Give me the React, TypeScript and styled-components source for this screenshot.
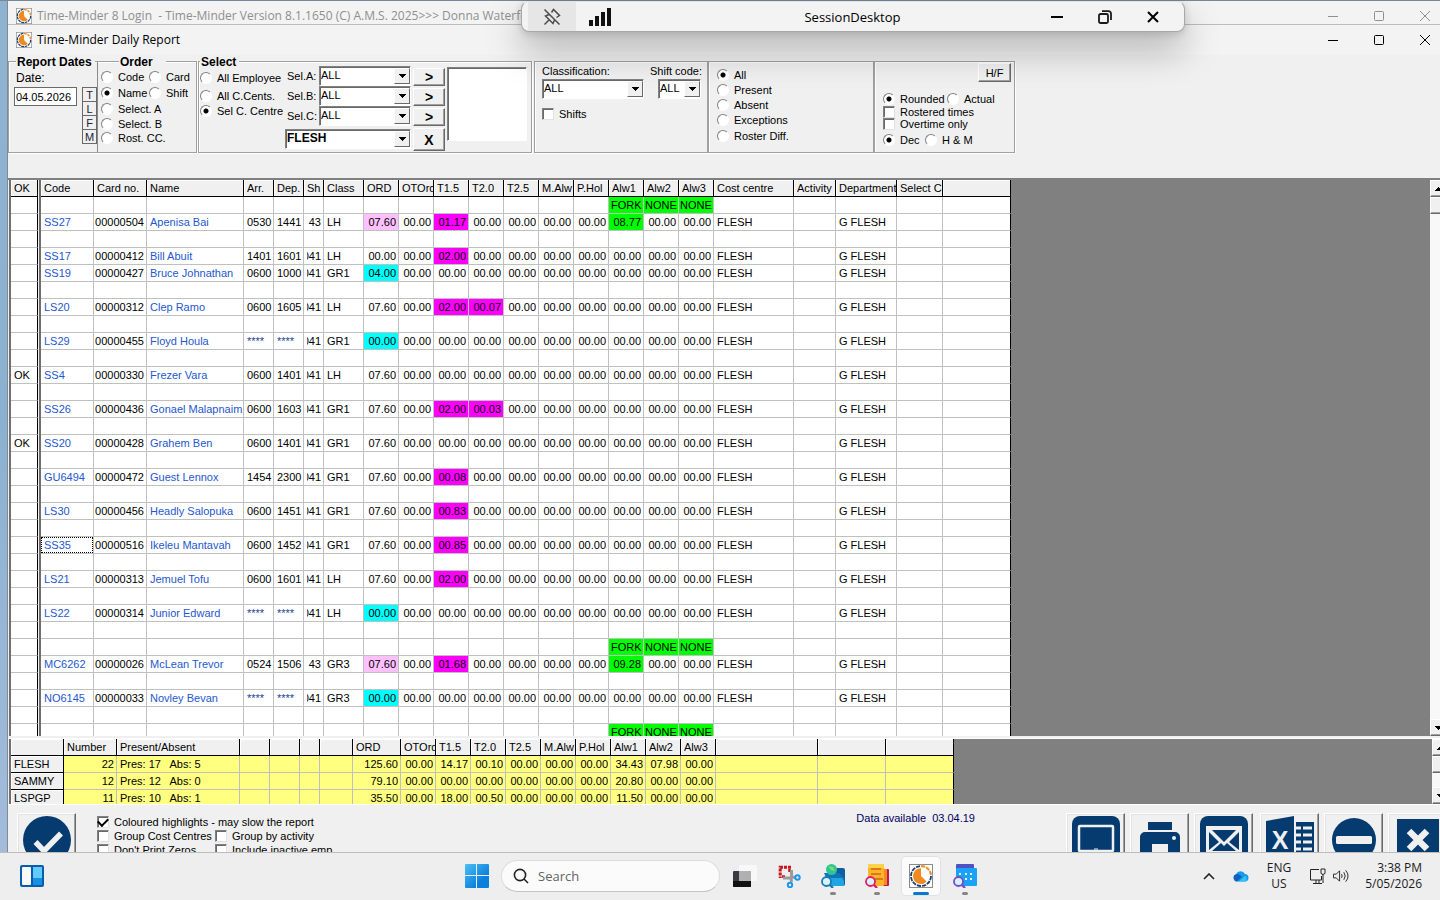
import React from "react";
import styled, { createGlobalStyle, css } from "styled-components";

const FACE = "#f0f0f0";
const NAVY = "#063b70";
const UI = '"Open Sans", "Noto Sans", sans-serif';
const CLASSIC = '"Liberation Sans", Arial, sans-serif';

const Global = createGlobalStyle`
  * { box-sizing: border-box; }
  html, body { margin: 0; padding: 0; height: 100%; overflow: hidden; }
  body { font: 11px/14px ${CLASSIC}; color: #000; }
  button, input, select { font: inherit; color: inherit; margin: 0; padding: 0; }
  button { cursor: pointer; }
`;

/* ---------- shell ---------- */

const Screen = styled.div`
  position: relative;
  display: flex;
  flex-direction: column;
  height: 100vh;
  overflow: hidden;
  background: ${FACE};
`;

const Desktop = styled.div`
  flex: 1;
  min-height: 0;
  display: flex;
  padding-left: 7px;
  border-top: 1px solid #76899a;
  background: linear-gradient(#8fb3cf, #8cb1d0 50%, #a4bbda);
`;

const Window = styled.main`
  flex: 1;
  min-width: 0;
  display: flex;
  flex-direction: column;
  overflow: hidden;
  border-left: 1px solid #7d8a98;
  background: ${FACE};
`;

const TitleBar = styled.header<{ $inactive?: boolean }>`
  flex: none;
  display: flex;
  align-items: center;
  height: ${(p) => (p.$inactive ? 24 : 30)}px;
  padding-left: 8px;
  gap: 5px;
  margin-right: -8px;
  font: 12px/16px ${UI};
  white-space: pre;
  background: #f3f3f3;
  color: ${(p) => (p.$inactive ? "#8f8f8f" : "#000")};
  ${(p) =>
    p.$inactive &&
    css`
      padding-top: 6px;
      border-bottom: 1px solid #bcbcbc;
    `}
`;

const Caption = styled.h1`
  flex: 1;
  margin: 0;
  font: inherit;
`;

const WindowButtons = styled.div`
  display: flex;
`;

const WindowButton = styled.button<{ $wide?: number }>`
  display: flex;
  align-items: center;
  justify-content: center;
  width: ${(p) => p.$wide ?? 46}px;
  height: 20px;
  border: 0;
  background: none;
`;

/* ---------- remote session bar ---------- */

const SessionBar = styled.div`
  position: absolute;
  top: 1px;
  left: 521px;
  width: 664px;
  height: 31px;
  display: flex;
  align-items: center;
  padding: 0 7px 0 6px;
  border: 1px solid #a8a8a8;
  border-top-color: #e4e4e4;
  border-radius: 8px;
  background: #f3f3f3;
  box-shadow: 0 18px 36px rgba(0, 0, 0, 0.28), 0 2px 8px rgba(0, 0, 0, 0.16);
`;

const SessionTitle = styled.span`
  flex: 1;
  padding-left: 48px;
  text-align: center;
  font: 13px/18px ${UI};
`;

const PinButton = styled(WindowButton)`
  height: 29px;
  background: #e6e6e6;
`;

/* ---------- filters ---------- */

const Filters = styled.section`
  flex: none;
  display: flex;
  height: 123px;
  padding-top: 6px;
`;

const Panel = styled.div<{ $w: number; $gap?: number }>`
  flex: none;
  display: flex;
  width: ${(p) => p.$w}px;
  height: 92px;
  margin-right: ${(p) => p.$gap ?? 0}px;
  border: 1px solid #a0a0a0;
  box-shadow: 1px 1px 0 #fff, inset 1px 1px 0 #fff;
`;

const Column = styled.div<{ $w?: number; $top?: number; $left?: number; $line?: boolean }>`
  display: flex;
  flex-direction: column;
  ${(p) => (p.$w ? `flex: none; width: ${p.$w}px;` : "flex: 1; min-width: 0;")}
  padding-top: ${(p) => p.$top ?? 0}px;
  padding-left: ${(p) => p.$left ?? 0}px;
  ${(p) => p.$line && "border-left: 1px solid #8a8a8a;"}
`;

const Legend = styled.h2<{ $indent?: number; $tail?: number }>`
  align-self: flex-start;
  margin: -7px 0 0 ${(p) => p.$indent ?? 0}px;
  padding: 0 ${(p) => p.$tail ?? 3}px 0 1px;
  font: bold 12px/14px ${CLASSIC};
  white-space: nowrap;
  background: ${FACE};
`;

const Line = styled.div<{ $h: number }>`
  flex: none;
  display: flex;
  align-items: center;
  height: ${(p) => p.$h}px;
`;

const RightLine = styled.div`
  display: flex;
  justify-content: flex-end;
  height: 29px;
  padding-right: 3px;
`;

const OptionLabel = styled.label<{ $w?: number }>`
  display: flex;
  align-items: center;
  gap: 5px;
  white-space: nowrap;
  ${(p) => p.$w && `width: ${p.$w}px;`}
`;

const RadioInput = styled.input`
  appearance: none;
  flex: none;
  width: 12px;
  height: 12px;
  border: 1px solid;
  border-color: #808080 #fff #fff #808080;
  border-radius: 50%;
  background: #fff;
  &:checked {
    background: radial-gradient(circle, #000 2px, #fff 3px);
  }
`;

const CheckInput = styled.input`
  appearance: none;
  flex: none;
  display: grid;
  place-items: center;
  width: 12px;
  height: 12px;
  border: 1px solid;
  border-color: #808080 #e3e3e3 #e3e3e3 #808080;
  box-shadow: inset 1px 1px 0 #696969;
  background: #fff;
  &:checked::after {
    content: "";
    width: 8px;
    height: 5px;
    border: solid #000;
    border-width: 0 0 2px 2px;
    transform: rotate(-45deg) translate(1px, -1px);
  }
`;

const DateRow = styled.div`
  display: flex;
  align-items: flex-start;
  justify-content: space-between;
`;

const DateInput = styled.input`
  width: 63px;
  height: 19px;
  padding-left: 1px;
  border: 1px solid #696969;
  background: #fff;
`;

const DateLabel = styled.label`
  padding-left: 2px;
  font-size: 12px;
  line-height: 20px;
`;

const LetterButtons = styled.div`
  display: flex;
  flex-direction: column;
`;

const LetterButton = styled.button`
  width: 15px;
  height: 15px;
  margin-bottom: -1px;
  border: 1px solid #696969;
  line-height: 12px;
  color: #223;
  background: ${FACE};
`;

const ComboFrame = styled.span<{ $w: number; $bold?: boolean; $left?: number }>`
  flex: none;
  display: grid;
  width: ${(p) => p.$w}px;
  height: 20px;
  margin-left: ${(p) => p.$left ?? 0}px;
  border: 1px solid;
  border-color: #808080 #fff #fff #808080;
  box-shadow: inset 1px 1px 0 #696969;
  background: #fff;
  font: ${(p) => (p.$bold ? "bold 12px" : "11px")} / 14px ${CLASSIC};
`;

const ComboSelect = styled.select`
  grid-area: 1 / 1;
  appearance: none;
  width: 100%;
  padding: 0 16px 2px 1px;
  border: 0;
  background: transparent;
`;

const ComboArrow = styled.span`
  grid-area: 1 / 1;
  justify-self: end;
  align-self: center;
  display: grid;
  place-items: center;
  width: 16px;
  height: 16px;
  border: 1px solid;
  border-color: #fff #696969 #696969 #fff;
  background: ${FACE};
  pointer-events: none;
`;

const FieldLabel = styled.label<{ $w?: number }>`
  white-space: nowrap;
  line-height: 16px;
  ${(p) => p.$w && `width: ${p.$w}px; padding-left: 2px;`}
`;

const raised = css`
  border: 1px solid;
  border-color: #fff #696969 #696969 #fff;
  box-shadow: inset -1px -1px 0 #a0a0a0;
  background: ${FACE};
`;

const PushButton = styled.button<{ $w: number; $h: number; $strong?: boolean }>`
  ${raised}
  flex: none;
  width: ${(p) => p.$w}px;
  height: ${(p) => p.$h}px;
  font-size: ${(p) => (p.$strong ? 14 : 11)}px;
  font-weight: ${(p) => (p.$strong ? "bold" : "normal")};
  line-height: 14px;
`;

const ArrowButtons = styled.div`
  display: flex;
  flex-direction: column;
  gap: 2px;
  padding-top: 6px;
  margin: 0 2px;
`;

const ListBox = styled.div`
  width: 80px;
  height: 74px;
  margin-top: 5px;
  border: 1px solid;
  border-color: #808080 #fff #fff #808080;
  box-shadow: inset 1px 1px 0 #696969;
  background: #fff;
`;

/* ---------- grids ---------- */

const GridRow = styled.section<{ $fill?: boolean }>`
  display: flex;
  min-height: 0;
  overflow: hidden;
  ${(p) =>
    p.$fill
      ? "flex: 1; border-top: 2px solid #808080;"
      : "flex: none; height: 65px; margin-top: 3px; box-shadow: 0 -1px 0 #fff;"}
`;

const GridPane = styled.div<{ $grow?: boolean }>`
  ${(p) => (p.$grow ? "flex: 1; min-width: 0;" : "flex: none; margin: 0 1px 0 1px;")}
  overflow: hidden;
  border-left: 2px solid #6f6f6f;
  background: #808080;
`;

const SummaryPane = styled(GridPane)`
  margin-left: 1px;
`;

const Grid = styled.table<{ $w: number }>`
  width: ${(p) => p.$w}px;
  table-layout: fixed;
  border-collapse: separate;
  border-spacing: 0;
  background: #fff;
`;

const HeadCell = styled.th`
  height: 17px;
  padding: 0 0 0 3px;
  border-right: 1px solid #000;
  border-bottom: 1px solid #000;
  box-shadow: inset 1px 1px 0 #fff;
  background: ${FACE};
  font-weight: normal;
  text-align: left;
`;

const Cell = styled.td<{ $bg?: string; $fg?: string; $edge?: boolean; $pad?: string }>`
  height: 17px;
  padding: ${(p) => p.$pad ?? "0 0 0 3px"};
  border-right: 1px solid ${(p) => (p.$edge ? "#000" : "#c0c0c0")};
  border-bottom: 1px solid #c0c0c0;
  background: ${(p) => p.$bg ?? "transparent"};
  color: ${(p) => p.$fg ?? "inherit"};
`;

const Clip = styled.span<{ $right?: boolean; $focus?: boolean }>`
  display: flex;
  justify-content: ${(p) => (p.$right ? "flex-end" : "flex-start")};
  height: 14px;
  line-height: 14px;
  overflow: hidden;
  white-space: pre;
  ${(p) =>
    p.$focus &&
    css`
      height: 16px;
      margin-left: -3px;
      padding-left: 3px;
      line-height: 16px;
      outline: 1px dotted #000;
      outline-offset: -1px;
    `}
`;

const ScrollBar = styled.div<{ $w: number }>`
  flex: none;
  display: flex;
  flex-direction: column;
  width: ${(p) => p.$w}px;
  overflow: hidden;
  background: #f8f8f8;
`;

const ScrollButton = styled.button`
  ${raised}
  flex: none;
  display: grid;
  place-items: center;
  width: 17px;
  height: 17px;
`;

const ScrollTrack = styled.div`
  flex: 1;
`;

/* ---------- footer ---------- */

const Footer = styled.section`
  flex: none;
  display: flex;
  height: 48px;
  padding: 8px 1px 0 9px;
  margin-right: -8px;
  overflow: hidden;
  border-top: 1px solid #fff;
`;

const IconButton = styled.button`
  flex: none;
  display: flex;
  align-items: flex-start;
  justify-content: center;
  width: 59px;
  height: 59px;
  padding-top: 2px;
  border: 1px solid;
  border-color: #fff #696969 #696969 #fff;
  box-shadow: inset -1px -1px 0 #a0a0a0, inset 1px 1px 0 #e3e3e3;
  background: ${FACE};
`;

const Options = styled.div`
  display: grid;
  grid-template-columns: 118px auto;
  grid-auto-rows: 14px;
  align-content: start;
  margin-left: 21px;
  padding-top: 2px;
`;

const WideOption = styled.div`
  grid-column: 1 / -1;
`;

const DataNote = styled.p`
  flex: 1;
  margin: 0;
  padding-right: 91px;
  line-height: 10px;
  text-align: right;
  white-space: pre;
  color: #000060;
`;

const Actions = styled.div`
  display: flex;
  gap: 5px;
  & + & {
    margin-left: 7px;
  }
`;

/* ---------- taskbar ---------- */

const TaskBar = styled.nav`
  flex: none;
  display: grid;
  grid-template-columns: 1fr auto 1fr;
  align-items: center;
  height: 48px;
  padding: 0 18px 1px 20px;
  border-top: 1px solid #bdbdbd;
  background: #eeeeee;
  font: 12px/16px ${UI};
  color: #1b1b1b;
`;

const TaskGroup = styled.div`
  display: flex;
  align-items: center;
  justify-content: center;
`;

const TaskButton = styled.button<{ $state?: "open" | "active" }>`
  position: relative;
  display: flex;
  align-items: center;
  justify-content: center;
  width: 38px;
  height: 38px;
  margin: 0 3px;
  border: 0;
  border-radius: 4px;
  background: ${(p) => (p.$state === "active" ? "#fbfbfb" : "transparent")};
  ${(p) => p.$state === "active" && "box-shadow: 0 0 0 1px #e2e2e2;"}
  ${(p) =>
    p.$state &&
    css`
      &::after {
        content: "";
        position: absolute;
        bottom: 0;
        width: ${p.$state === "active" ? 16 : 6}px;
        height: 3px;
        border-radius: 2px;
        background: ${p.$state === "active" ? "#0b78d0" : "#868686"};
      }
    `}
`;

const SearchBox = styled.label`
  display: flex;
  align-items: center;
  gap: 9px;
  width: 219px;
  height: 32px;
  margin: 0 3px 0 2px;
  padding-left: 11px;
  border: 1px solid #dcdcdc;
  border-bottom-color: #c4c4c4;
  border-radius: 16px;
  background: #fbfbfb;
`;

const SearchInput = styled.input`
  width: 150px;
  border: 0;
  outline: 0;
  background: none;
  font: 13px/18px ${UI};
  &::placeholder {
    color: #636363;
    opacity: 1;
  }
`;

const Tray = styled.div`
  display: flex;
  align-items: center;
  justify-content: flex-end;
`;

const TrayText = styled.div<{ $right?: boolean; $w: number }>`
  width: ${(p) => p.$w}px;
  text-align: ${(p) => (p.$right ? "right" : "center")};
  white-space: nowrap;
`;

const TrayIcon = styled.span<{ $w: number }>`
  display: flex;
  justify-content: center;
  width: ${(p) => p.$w}px;
`;

/* ---------- icons ---------- */

const ClockLogo = ({ size }: { size: number }) => (
  <svg width={size} height={size} viewBox="0 0 24 24">
    <rect x=".5" y=".5" width="23" height="23" fill="#fff" stroke="#8a8a8a" />
    <circle cx="12" cy="12" r="10" fill="none" stroke="#1d3f6e" strokeWidth="1.8" strokeDasharray="4.2 1" />
    <path d="M12 2a10 10 0 0 1 10 10" fill="none" stroke="#fff" strokeWidth="2.4" />
    <path d="M12 2a10 10 0 0 1 10 10" fill="none" stroke="#f08a1c" strokeWidth="1.8" strokeDasharray="4.2 1" />
    <path d="M12 12V4.2A7.9 7.9 0 1 0 17.6 17.6z" fill="#f08a1c" />
  </svg>
);

const Minimize = ({ w = 1 }: { w?: number }) => (
  <svg width="12" height="12" viewBox="0 0 12 12"><path d={w > 1 ? "M0 6h12" : "M1 6.500h10"} stroke="currentColor" strokeWidth={w} /></svg>
);
const Maximize = () => (
  <svg width="12" height="12" viewBox="0 0 12 12"><rect x="1.500" y="1.500" width="9" height="9" rx="1" fill="none" stroke="currentColor" /></svg>
);
const CloseX = ({ w = 1 }: { w?: number }) => (
  <svg width="12" height="12" viewBox="0 0 12 12"><path d="M1 1l10 10M11 1L1 11" stroke="currentColor" strokeWidth={w} /></svg>
);
const Restore = () => (
  <svg width="14" height="14" viewBox="0 0 14 14" fill="none" stroke="#1a1a1a" strokeWidth="1.800">
    <rect x="1" y="4" width="9" height="9" rx="1.500" />
    <path d="M4 1.200h6.500a2.500 2.500 0 0 1 2.500 2.500V10" />
  </svg>
);
const Unpin = () => (
  <svg width="18" height="18" viewBox="0 0 18 18" fill="none" stroke="#4c4c4c" strokeWidth="1.500">
    <path d="M1.500 1.500l15 15M1.500 16.500l5-5M6 6.500L2.500 8l7.500 7.500 1.500-3.500M8.500 4.500l2-3 6 6-3 2" />
  </svg>
);
const Signal = () => (
  <svg width="22" height="18" viewBox="0 0 22 18" fill="#111"><path d="M0 12h4v6H0zM6 8h4v10H6zM12 4h4v14h-4zM18 0h4v18h-4z" /></svg>
);
const Triangle = ({ up }: { up?: boolean }) => (
  <svg width="7" height="4" viewBox="0 0 7 4" shapeRendering="crispEdges"><path d={up ? "M0 4L3.500 0 7 4z" : "M0 0h7L3.500 4z"} /></svg>
);

const CheckIcon = () => (
  <svg width="48" height="48" viewBox="0 0 48 48"><circle cx="24" cy="24" r="24" fill={NAVY} /><path d="M12.500 26l8.500 9L38 17.500" fill="none" stroke={FACE} strokeWidth="5.500" /></svg>
);
const ScreenIcon = () => (
  <svg width="48" height="48" viewBox="0 0 48 48">
    <rect width="48" height="48" rx="8" fill={NAVY} />
    <rect x="7" y="10" width="34" height="25" rx="1" fill="none" stroke={FACE} strokeWidth="2.500" />
    <path d="M22 33h4" stroke={FACE} strokeWidth="1" />
  </svg>
);
const PrintIcon = () => (
  <svg width="48" height="48" viewBox="0 0 48 48">
    <path d="M12 6h24v8H12zM9 16h30a5 5 0 0 1 5 5v15h-8v6H12v-6H4V21a5 5 0 0 1 5-5z" fill={NAVY} />
    <path d="M16 28h16v12H16z" fill={FACE} />
    <circle cx="38" cy="22" r="2" fill={FACE} />
  </svg>
);
const MailIcon = () => (
  <svg width="48" height="48" viewBox="0 0 48 48">
    <rect width="48" height="48" rx="8" fill={NAVY} />
    <rect x="6" y="10" width="36" height="28" fill={FACE} />
    <path d="M12 14h24L24 26zM9 16l10 10L9 34zM39 16L29 26l10 8zM12 35l9-8 3 3 3-3 9 8z" fill={NAVY} />
  </svg>
);
const ExcelIcon = () => (
  <svg width="48" height="48" viewBox="0 0 48 48">
    <path d="M0 5L28 0v48L0 43z" fill={NAVY} />
    <path d="M30 6h18v36H30z" fill={NAVY} />
    <path d="M30 12h5M37 12h9M30 19h5M37 19h9M30 26h5M37 26h9M30 33h5M37 33h9" stroke={FACE} strokeWidth="3" />
    <text x="14" y="33" textAnchor="middle" fontFamily="Liberation Sans" fontWeight="bold" fontSize="25" fill={FACE}>X</text>
  </svg>
);
const MinusIcon = () => (
  <svg width="48" height="48" viewBox="0 0 48 48"><circle cx="24" cy="24" r="22" fill={NAVY} /><rect x="6" y="20" width="36" height="8" rx="1.500" fill={FACE} /></svg>
);
const CrossIcon = () => (
  <svg width="48" height="48" viewBox="0 0 48 48"><rect x="3" y="3" width="42" height="42" fill={NAVY} /><path d="M15 15l18 18M33 15L15 33" stroke={FACE} strokeWidth="6.500" /></svg>
);

const WidgetIcon = () => (
  <svg width="24" height="22" viewBox="0 0 24 22"><rect width="24" height="22" rx="2" fill="#0a5cad" /><rect x="2" y="2" width="9" height="18" rx="1" fill="#fafafa" /><rect x="13" y="2" width="9" height="11" fill="#62ccf8" /><rect x="13" y="13" width="9" height="7" fill="#1690e4" /></svg>
);
const StartIcon = () => (
  <svg width="24" height="24" viewBox="0 0 24 24">
    <defs><linearGradient id="win" x1="0" y1="0" x2="1" y2="1"><stop offset="0" stopColor="#4cc0f5" /><stop offset=".7" stopColor="#0a7fdc" /></linearGradient></defs>
    <path d="M1 0h10v11H0V1a1 1 0 0 1 1-1zM12 0h11a1 1 0 0 1 1 1v10H12zM0 12h11v12H1a1 1 0 0 1-1-1zM12 12h12v11a1 1 0 0 1-1 1H12z" fill="url(#win)" />
  </svg>
);
const SearchIcon = () => (
  <svg width="16" height="16" viewBox="0 0 16 16" fill="none" stroke="#222" strokeWidth="1.600"><circle cx="7" cy="7" r="5.600" /><path d="M11 11l4 4" /></svg>
);
const TaskViewIcon = () => (
  <svg width="24" height="24" viewBox="0 0 24 24"><rect x="6" y="1" width="18" height="16" rx="1" fill="#f8f8f8" /><rect x="0" y="7" width="18" height="16" rx="1" fill="#3a3a40" /><path d="M0 17h18v5a1 1 0 0 1-1 1H1a1 1 0 0 1-1-1z" fill="#111" /><rect x="6" y="7" width="12" height="10" fill="#b0b0b0" /></svg>
);
const SnipIcon = () => (
  <svg width="24" height="24" viewBox="0 0 24 24" fill="none">
    <path d="M14 3.200H3.200V14" stroke="#c8141c" strokeWidth="3" strokeDasharray="3 1" />
    <path d="M5 12.500h3M12.500 5v3" stroke="#c8141c" strokeWidth="2.500" />
    <path d="M14.500 6v7l4 .5M6 14h8l.5 4" stroke="#9a9a9a" strokeWidth="3" />
    <circle cx="20.500" cy="13.500" r="2.200" stroke="#1c96ee" strokeWidth="2" /><circle cx="13" cy="21" r="2.200" stroke="#1c96ee" strokeWidth="2" />
  </svg>
);
const Magnifier = ({ color }: { color: string }) => (
  <g><path d="M8 20l4 4" stroke={color} strokeWidth="2.400" /><circle cx="5.500" cy="17.500" r="4.500" fill="#d8f1fc" stroke={color} strokeWidth="1.800" /></g>
);
const RemoteIcon = () => (
  <svg width="24" height="24" viewBox="0 0 24 24"><rect x="14" y="4" width="10" height="18" rx="2" fill="#0d5f9f" /><path d="M3 9h15l5 5v6H8z" fill="#1173b8" /><path d="M9 14h12l2 3v5H10z" fill="#20a5e4" /><circle cx="10.500" cy="5.500" r="5.500" fill="#2fc596" /><path d="M7 2l5 1 2 4-4-1z" fill="#7be069" /><Magnifier color="#1879b4" /></svg>
);
const NotesIcon = () => (
  <svg width="24" height="24" viewBox="0 0 24 24"><rect x="17" y="5" width="7" height="17" rx="1" fill="#c4174f" /><rect x="17" y="5" width="5" height="16" fill="#f58a1c" /><rect x="3" y="0" width="16" height="22" rx="1" fill="#fdb42a" /><rect x="3" y="0" width="16" height="4" rx="1" fill="#ffd24a" /><path d="M6 5h10M6 10h10M10 15h8" stroke="#d9791a" strokeWidth="1.800" /><Magnifier color="#dc2065" /></svg>
);
const CalendarIcon = () => (
  <svg width="24" height="24" viewBox="0 0 24 24"><rect x="3" y="0" width="18" height="10" rx="1" fill="#4e52c4" /><rect x="3" y="4" width="21" height="18" rx="1" fill="#1aa2f6" /><path d="M6 10h2M12 10h2M17 10h2M12 15h2M17 15h2" stroke="#e8f7ff" strokeWidth="2" /><Magnifier color="#7350c8" /></svg>
);
const ChevronUp = () => (
  <svg width="12" height="7" viewBox="0 0 12 7" fill="none" stroke="#222" strokeWidth="1.600"><path d="M1 6l5-5 5 5" /></svg>
);
const CloudIcon = () => (
  <svg width="16" height="12" viewBox="0 0 16 12"><path d="M4 11.500A3.800 3.800 0 0 1 3 4.200 5 5 0 0 1 12 4a3.800 3.800 0 0 1 .5 7.500z" fill="#159bea" /><path d="M4 11.500A3.800 3.800 0 0 1 3 4.200C5.500 3.700 8 5.500 9 7z" fill="#1061c0" /><path d="M6 11.500l6-5.500a3.500 3.500 0 0 1 .5 5.500z" fill="#35c0f6" /></svg>
);
const NetworkIcon = () => (
  <svg width="17" height="17" viewBox="0 0 17 17" fill="none" stroke="#222"><path d="M10 1.500H1.500v10.500h11V8M4 15.500h9M7 12v3M10 12v3M12 1h4v4.500l-2 1-2-1zM14 6.500V15" /></svg>
);
const SpeakerIcon = () => (
  <svg width="17" height="14" viewBox="0 0 17 14" fill="none" stroke="#222"><path d="M.5 5h3L7 1.500v11L3.500 9h-3zM9 5q1.500 2 0 4M11.500 3q3 4 0 8M13.500 1q5 6 0 12" /></svg>
);

/* ---------- form helpers ---------- */

const Radio = ({ group, label, on, w }: { group: string; label: string; on?: boolean; w?: number }) => (
  <OptionLabel $w={w}>
    <RadioInput type="radio" name={group} defaultChecked={on} />
    {label}
  </OptionLabel>
);

const Check = ({ label, on }: { label: string; on?: boolean }) => (
  <OptionLabel>
    <CheckInput type="checkbox" defaultChecked={on} />
    {label}
  </OptionLabel>
);

const Combo = ({ id, value, w, bold, left, name }: { id: string; value: string; w: number; bold?: boolean; left?: number; name?: string }) => (
  <ComboFrame $w={w} $bold={bold} $left={left}>
    <ComboSelect id={id} aria-label={name}>
      <option>{value}</option>
    </ComboSelect>
    <ComboArrow><Triangle /></ComboArrow>
  </ComboFrame>
);

/* ---------- data ---------- */

const PINK = "#ffc0ff";
const MAGENTA = "#ff00ff";
const CYAN = "#00ffff";
const LIME = "#00ff00";
const LINK = "#2457d0";
const Z = "00.00";

const COLUMNS: [string, number][] = [
  ["Code", 53], ["Card no.", 53], ["Name", 97], ["Arr.", 30], ["Dep.", 30], ["Sh", 20], ["Class", 40],
  ["ORD", 35], ["OTOrd", 35], ["T1.5", 35], ["T2.0", 35], ["T2.5", 35], ["M.Alw", 35], ["P.Hol", 35],
  ["Alw1", 35], ["Alw2", 35], ["Alw3", 35], ["Cost centre", 80], ["Activity", 42], ["Department", 61],
  ["Select C", 46], ["", 68],
];

interface Employee {
  kind: "employee";
  code: string; card: string; name: string; arr: string; dep: string; sh: string; cls: string;
  ord: string; ordBg?: string; t15?: string; t20?: string; alw1?: string; ok?: boolean; focus?: boolean;
}
type Row = Employee | { kind: "blank" } | { kind: "labels" };

const blank: Row = { kind: "blank" };
const labels: Row = { kind: "labels" };
const emp = (
  code: string, card: string, name: string, arr: string, dep: string, sh: string, cls: string,
  ord: string, extra: Partial<Employee> = {},
): Row => ({ kind: "employee", code, card, name, arr, dep, sh, cls, ord, ...extra });

const ROWS: Row[] = [
  labels,
  emp("SS27", "00000504", "Apenisa Bai", "0530", "1441", "43", "LH", "07.60", { ordBg: PINK, t15: "01.17", alw1: "08.77" }),
  blank,
  emp("SS17", "00000412", "Bill Abuit", "1401", "1601", "041", "LH", Z, { t15: "02.00" }),
  emp("SS19", "00000427", "Bruce Johnathan", "0600", "1000", "041", "GR1", "04.00", { ordBg: CYAN }),
  blank,
  emp("LS20", "00000312", "Clep Ramo", "0600", "1605", "041", "LH", "07.60", { t15: "02.00", t20: "00.07" }),
  blank,
  emp("LS29", "00000455", "Floyd Houla", "****", "****", "041", "GR1", Z, { ordBg: CYAN }),
  blank,
  emp("SS4", "00000330", "Frezer Vara", "0600", "1401", "041", "LH", "07.60", { ok: true }),
  blank,
  emp("SS26", "00000436", "Gonael Malapnaim", "0600", "1603", "041", "GR1", "07.60", { t15: "02.00", t20: "00.03" }),
  blank,
  emp("SS20", "00000428", "Grahem Ben", "0600", "1401", "041", "GR1", "07.60", { ok: true }),
  blank,
  emp("GU6494", "00000472", "Guest Lennox", "1454", "2300", "041", "GR1", "07.60", { t15: "00.08" }),
  blank,
  emp("LS30", "00000456", "Headly Salopuka", "0600", "1451", "041", "GR1", "07.60", { t15: "00.83" }),
  blank,
  emp("SS35", "00000516", "Ikeleu Mantavah", "0600", "1452", "041", "GR1", "07.60", { t15: "00.85", focus: true }),
  blank,
  emp("LS21", "00000313", "Jemuel Tofu", "0600", "1601", "041", "LH", "07.60", { t15: "02.00" }),
  blank,
  emp("LS22", "00000314", "Junior Edward", "****", "****", "041", "LH", Z, { ordBg: CYAN }),
  blank,
  labels,
  emp("MC6262", "00000026", "McLean Trevor", "0524", "1506", "43", "GR3", "07.60", { ordBg: PINK, t15: "01.68", alw1: "09.28" }),
  blank,
  emp("NO6145", "00000033", "Novley Bevan", "****", "****", "041", "GR3", Z, { ordBg: CYAN }),
  blank,
  labels,
];

const SUMMARY_COLUMNS: [string, number][] = [
  ["", 53], ["Number", 53], ["Present/Absent", 123], ["", 30], ["", 30], ["", 20], ["", 33], ["ORD", 48],
  ["OTOrd", 35], ["T1.5", 35], ["T2.0", 35], ["T2.5", 35], ["M.Alw", 35], ["P.Hol", 35], ["Alw1", 35],
  ["Alw2", 35], ["Alw3", 35], ["", 102], ["", 68], ["", 68],
];

const SUMMARY: string[][] = [
  ["FLESH", "22", "Pres: 17   Abs: 5", "", "", "", "", "125.60", Z, "14.17", "00.10", Z, Z, Z, "34.43", "07.98", Z, "", "", ""],
  ["SAMMY", "12", "Pres: 12   Abs: 0", "", "", "", "", "79.10", Z, Z, Z, Z, Z, Z, "20.80", Z, Z, "", "", ""],
  ["LSPGP", "11", "Pres: 10   Abs: 1", "", "", "", "", "35.50", Z, "18.00", "00.50", Z, Z, Z, "11.50", Z, Z, "", "", ""],
];

const total = (cols: [string, number][]) => cols.reduce((sum, c) => sum + c[1], 0);

const Head = ({ cols }: { cols: [string, number][] }) => (
  <>
    <colgroup>{cols.map((c, i) => <col key={i} width={c[1]} />)}</colgroup>
    <thead>
      <tr>{cols.map((c, i) => <HeadCell key={i}><Clip>{c[0]}</Clip></HeadCell>)}</tr>
    </thead>
  </>
);

interface CellData { t: string; right?: boolean; bg?: string; fg?: string; focus?: boolean; pad?: string }

const NUMBER_PAD = "0 2px 0 1px";

const cellsOf = (row: Row): CellData[] => {
  if (row.kind === "blank") return COLUMNS.map(() => ({ t: "" }));
  if (row.kind === "labels")
    return COLUMNS.map(([c]) =>
      c === "Alw1" ? { t: "FORK", bg: LIME, pad: "0 0 0 2px" }
        : c === "Alw2" || c === "Alw3" ? { t: "NONE", bg: LIME, pad: "0 0 0 1px" }
        : { t: "" });
  const num = (v?: string, bg?: string): CellData => ({ t: v ?? Z, right: true, bg: v ? bg : undefined, pad: NUMBER_PAD });
  const time = (v: string): CellData => ({ t: v, fg: v === "****" ? "#1c3f94" : undefined });
  return [
    { t: row.code, fg: LINK, focus: row.focus },
    { t: row.card, right: true, pad: NUMBER_PAD },
    { t: row.name, fg: LINK },
    time(row.arr), time(row.dep),
    { t: row.sh, right: true, pad: "0 2px 0 3px" },
    { t: row.cls },
    num(row.ord, row.ordBg), num(), num(row.t15, MAGENTA), num(row.t20, MAGENTA), num(), num(), num(),
    num(row.alw1, LIME), num(), num(),
    { t: "FLESH" }, { t: "" }, { t: "G FLESH" }, { t: "" }, { t: "" },
  ];
};

const Scroll = ({ w }: { w: number }) => (
  <ScrollBar $w={w}>
    <ScrollButton aria-label="Scroll up"><Triangle up /></ScrollButton>
    <ScrollButton aria-label="Scroll thumb" />
    <ScrollTrack />
    <ScrollButton aria-label="Scroll down"><Triangle /></ScrollButton>
  </ScrollBar>
);

const Controls = () => (
  <WindowButtons>
    <WindowButton aria-label="Minimize"><Minimize /></WindowButton>
    <WindowButton aria-label="Maximize"><Maximize /></WindowButton>
    <WindowButton aria-label="Close"><CloseX /></WindowButton>
  </WindowButtons>
);

/* ---------- sections ---------- */

const FilterBar = () => (
  <Filters>
    <Panel $w={189} $gap={1}>
      <Column $w={88} $left={5}>
        <Legend $indent={2}>Report Dates</Legend>
        <Line $h={18}><DateLabel htmlFor="date">Date:</DateLabel></Line>
        <DateRow>
          <DateInput id="date" defaultValue="04.05.2026" />
          <LetterButtons>{["T", "L", "F", "M"].map((l) => <LetterButton key={l}>{l}</LetterButton>)}</LetterButtons>
        </DateRow>
      </Column>
      <Column $left={3} $line>
        <Legend $indent={18} $tail={13}>Order</Legend>
        <Line $h={16}><Radio group="order" label="Code" w={48} /><Radio group="order" label="Card" /></Line>
        <Line $h={16}><Radio group="order" label="Name" w={48} on /><Radio group="order" label="Shift" /></Line>
        <Line $h={16}><Radio group="order" label="Select. A" /></Line>
        <Line $h={14}><Radio group="order" label="Select. B" /></Line>
        <Line $h={14}><Radio group="order" label="Rost. CC." /></Line>
      </Column>
    </Panel>

    <Panel $w={334} $gap={2}>
      <Column $w={86} $left={1}>
        <Legend>Select</Legend>
        <Line $h={18}><Radio group="scope" label="All Employee" /></Line>
        <Line $h={17}><Radio group="scope" label="All C.Cents." /></Line>
        <Line $h={14}><Radio group="scope" label="Sel C. Centre" on /></Line>
      </Column>
      <Column $w={126} $top={4}>
        {["A", "B", "C"].map((k) => (
          <Line $h={20} key={k}>
            <FieldLabel $w={34} htmlFor={"sel" + k}>{"Sel." + k + ":"}</FieldLabel>
            <Combo id={"sel" + k} value="ALL" w={92} />
          </Line>
        ))}
        <Line $h={26}><Combo id="centre" name="Cost centre" value="FLESH" w={126} bold /></Line>
      </Column>
      <ArrowButtons>
        <PushButton $w={32} $h={18} $strong>&gt;</PushButton>
        <PushButton $w={32} $h={18} $strong>&gt;</PushButton>
        <PushButton $w={32} $h={18} $strong>&gt;</PushButton>
        <PushButton $w={32} $h={23} $strong>X</PushButton>
      </ArrowButtons>
      <ListBox />
    </Panel>

    <Panel $w={174}>
      <Column $w={115} $left={7}>
        <Line $h={17}><FieldLabel htmlFor="classification">Classification:</FieldLabel></Line>
        <Combo id="classification" value="ALL" w={102} />
        <Line $h={30}><Check label="Shifts" /></Line>
      </Column>
      <Column>
        <Line $h={17}><FieldLabel htmlFor="shift">Shift code:</FieldLabel></Line>
        <Combo id="shift" value="ALL" w={43} left={8} />
      </Column>
    </Panel>

    <Panel $w={166}>
      <Column $top={5} $left={8}>
        <Line $h={15}><Radio group="show" label="All" on /></Line>
        <Line $h={15}><Radio group="show" label="Present" /></Line>
        <Line $h={15}><Radio group="show" label="Absent" /></Line>
        <Line $h={15}><Radio group="show" label="Exceptions" /></Line>
        <Line $h={18}><Radio group="show" label="Roster Diff." /></Line>
      </Column>
    </Panel>

    <Panel $w={141}>
      <Column $top={1} $left={8}>
        <RightLine><PushButton $w={33} $h={19}>H/F</PushButton></RightLine>
        <Line $h={14}><Radio group="round" label="Rounded" w={64} on /><Radio group="round" label="Actual" /></Line>
        <Line $h={12}><Check label="Rostered times" /></Line>
        <Line $h={12}><Check label="Overtime only" /></Line>
        <Line $h={20}><Radio group="unit" label="Dec" w={42} on /><Radio group="unit" label="H &amp; M" /></Line>
      </Column>
    </Panel>
  </Filters>
);

const ReportGrid = () => (
  <GridRow $fill>
    <GridPane>
      <Grid $w={27}>
        <Head cols={[["OK", 27]]} />
        <tbody>
          {ROWS.map((r, i) => (
            <tr key={i}><Cell $edge><Clip>{r.kind === "employee" && r.ok ? "OK" : ""}</Clip></Cell></tr>
          ))}
        </tbody>
      </Grid>
    </GridPane>
    <GridPane $grow>
      <Grid $w={total(COLUMNS)}>
        <Head cols={COLUMNS} />
        <tbody>
          {ROWS.map((r, i) => {
            const cells = cellsOf(r);
            return (
              <tr key={i}>
                {cells.map((c, j) => (
                  <Cell key={j} $bg={c.bg} $fg={c.fg} $pad={c.pad} $edge={j === cells.length - 1}>
                    <Clip $right={c.right} $focus={c.focus}>{c.t}</Clip>
                  </Cell>
                ))}
              </tr>
            );
          })}
        </tbody>
      </Grid>
    </GridPane>
    <Scroll w={10} />
  </GridRow>
);

const SummaryGrid = () => (
  <GridRow>
    <SummaryPane $grow>
      <Grid $w={total(SUMMARY_COLUMNS)}>
        <Head cols={SUMMARY_COLUMNS} />
        <tbody>
          {SUMMARY.map((r) => (
            <tr key={r[0]}>
              {r.map((t, j) =>
                j === 0 ? (
                  <HeadCell key={j} scope="row"><Clip>{t}</Clip></HeadCell>
                ) : (
                  <Cell key={j} $bg="#ffff80" $pad={j === 2 ? undefined : NUMBER_PAD} $edge={j === r.length - 1}>
                    <Clip $right={j !== 2}>{t}</Clip>
                  </Cell>
                ),
              )}
            </tr>
          ))}
        </tbody>
      </Grid>
    </SummaryPane>
    <Scroll w={8} />
  </GridRow>
);

const FooterBar = () => (
  <Footer>
    <IconButton aria-label="Accept"><CheckIcon /></IconButton>
    <Options>
      <WideOption><Check label="Coloured highlights - may slow the report" on /></WideOption>
      <Check label="Group Cost Centres" /><Check label="Group by activity" />
      <Check label="Don't Print Zeros" /><Check label="Include inactive emp" />
    </Options>
    <DataNote>{"Data available  03.04.19"}</DataNote>
    <Actions>
      <IconButton aria-label="View on screen"><ScreenIcon /></IconButton>
      <IconButton aria-label="Print"><PrintIcon /></IconButton>
      <IconButton aria-label="Email"><MailIcon /></IconButton>
    </Actions>
    <Actions>
      <IconButton aria-label="Export to Excel"><ExcelIcon /></IconButton>
      <IconButton aria-label="Remove"><MinusIcon /></IconButton>
      <IconButton aria-label="Close report"><CrossIcon /></IconButton>
    </Actions>
  </Footer>
);

const StartGroup = () => (
  <TaskGroup>
    <TaskButton aria-label="Start"><StartIcon /></TaskButton>
    <SearchBox><SearchIcon /><SearchInput placeholder="Search" aria-label="Search" /></SearchBox>
    <TaskButton aria-label="Task view"><TaskViewIcon /></TaskButton>
    <TaskButton aria-label="Snipping"><SnipIcon /></TaskButton>
    <TaskButton aria-label="Remote" $state="open"><RemoteIcon /></TaskButton>
    <TaskButton aria-label="Notes" $state="open"><NotesIcon /></TaskButton>
    <TaskButton aria-label="Time-Minder" $state="active"><ClockLogo size={24} /></TaskButton>
    <TaskButton aria-label="Calendar" $state="open"><CalendarIcon /></TaskButton>
  </TaskGroup>
);

export default function App() {
  return (
    <Screen>
      <Global />
      <Desktop>
        <Window>
          <TitleBar $inactive>
            <ClockLogo size={16} />
            <Caption>{"Time-Minder 8 Login  - Time-Minder Version 8.1.1650 (C) A.M.S. 2025>>> Donna Waterford"}</Caption>
            <Controls />
          </TitleBar>
          <TitleBar>
            <ClockLogo size={16} />
            <Caption>Time-Minder Daily Report</Caption>
            <Controls />
          </TitleBar>
          <FilterBar />
          <ReportGrid />
          <SummaryGrid />
          <FooterBar />
        </Window>
      </Desktop>
      <SessionBar>
        <PinButton aria-label="Unpin" $wide={48}><Unpin /></PinButton>
        <WindowButton aria-label="Connection" $wide={48}><Signal /></WindowButton>
        <SessionTitle>SessionDesktop</SessionTitle>
        <WindowButton aria-label="Minimize session" $wide={48}><Minimize w={2} /></WindowButton>
        <WindowButton aria-label="Restore session" $wide={48}><Restore /></WindowButton>
        <WindowButton aria-label="Close session" $wide={48}><CloseX w={2} /></WindowButton>
      </SessionBar>
      <TaskBar>
        <WidgetIcon />
        <StartGroup />
        <Tray>
          <TrayIcon $w={32}><ChevronUp /></TrayIcon>
          <TrayIcon $w={32}><CloudIcon /></TrayIcon>
          <TrayText $w={44}>ENG<br />US</TrayText>
          <TrayIcon $w={32}><NetworkIcon /></TrayIcon>
          <TrayIcon $w={16}><SpeakerIcon /></TrayIcon>
          <TrayText $w={73} $right>3:38 PM<br />5/05/2026</TrayText>
        </Tray>
      </TaskBar>
    </Screen>
  );
}
